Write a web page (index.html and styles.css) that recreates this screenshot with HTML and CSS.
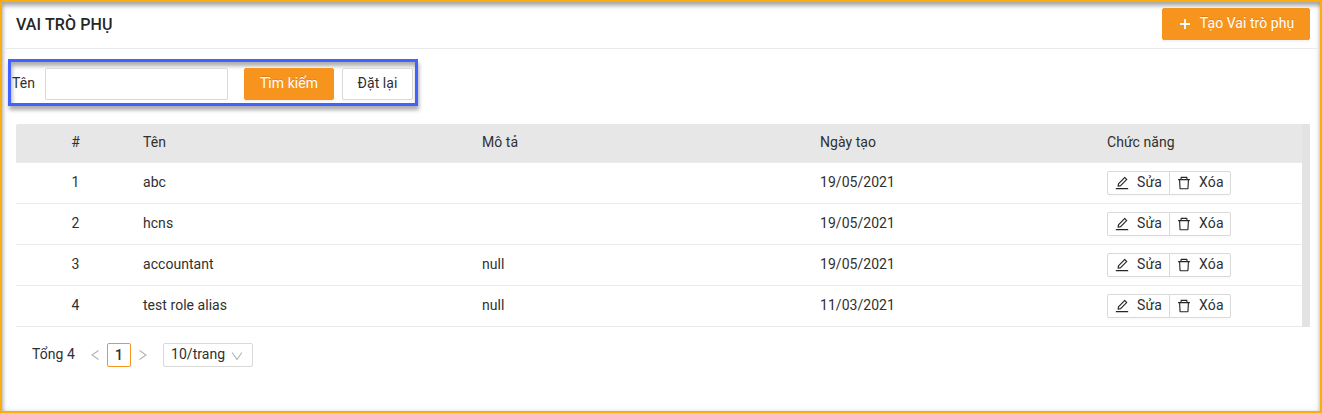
FILE: index.html
```html
<!DOCTYPE html>
<html lang="vi">
<head>
<meta charset="utf-8">
<title>Vai trò phụ</title>
<link rel="stylesheet" href="styles.css">
</head>
<body>
<svg class="sprite" aria-hidden="true">
  <symbol id="edit" viewBox="64 64 896 896"><path d="M257.700 752c2 0 4-.2 6-.5L431.900 722c2-.4 3.900-1.300 5.300-2.800l423.900-423.900a9.960 9.960 0 0 0 0-14.100L694.900 114.900c-1.900-1.900-4.400-2.900-7.100-2.900s-5.200 1-7.100 2.900L256.800 538.800c-1.500 1.500-2.400 3.300-2.800 5.300l-29.500 168.200a33.500 33.500 0 0 0 9.400 29.800c6.600 6.400 14.900 9.900 23.800 9.900zm67.400-174.400L687.800 215l73.300 73.300-362.700 362.600-88.900 15.700 15.600-89zM880 836H144c-17.700 0-32 14.300-32 32v36c0 4.400 3.600 8 8 8h784c4.400 0 8-3.600 8-8v-36c0-17.700-14.300-32-32-32z"/></symbol>
  <symbol id="trash" viewBox="64 64 896 896"><path d="M360 184h-8c4.400 0 8-3.600 8-8v8h304v-8c0 4.400 3.600 8 8 8h-8v72h72v-80c0-35.300-28.700-64-64-64H352c-35.300 0-64 28.700-64 64v80h72v-72zm504 72H160c-17.700 0-32 14.300-32 32v32c0 4.400 3.600 8 8 8h60.400l24.700 523c1.600 34.100 29.800 61 63.900 61h454c34.200 0 62.300-26.800 63.900-61l24.700-523H888c4.400 0 8-3.600 8-8v-32c0-17.700-14.300-32-32-32zM731.300 840H292.700l-24.200-512h487l-24.200 512z"/></symbol>
</svg>
<main class="panel">
  <header class="head">
    <h1 class="title">VAI TRÒ PHỤ</h1>
    <button class="btn primary create"><svg class="plus" viewBox="0 0 14 14"><path d="M7 2v10M2 7h10"/></svg><span>Tạo Vai trò phụ</span></button>
  </header>
  <form class="search">
    <label class="label" for="name">Tên</label>
    <input class="input" id="name" type="text">
    <button class="btn primary find" type="button">Tìm kiếm</button>
    <button class="btn reset" type="button">Đặt lại</button>
  </form>
  <section class="table">
    <div class="rows">
      <div class="row thead"><span class="num">#</span><span>Tên</span><span>Mô tả</span><span>Ngày tạo</span><span>Chức năng</span></div>
      <div class="row"><span class="num">1</span><span>abc</span><span></span><span>19/05/2021</span><div class="actions"><button class="act"><svg class="icon"><use href="#edit"/></svg>Sửa</button><button class="act"><svg class="icon"><use href="#trash"/></svg>Xóa</button></div></div>
      <div class="row"><span class="num">2</span><span>hcns</span><span></span><span>19/05/2021</span><div class="actions"><button class="act"><svg class="icon"><use href="#edit"/></svg>Sửa</button><button class="act"><svg class="icon"><use href="#trash"/></svg>Xóa</button></div></div>
      <div class="row"><span class="num">3</span><span>accountant</span><span>null</span><span>19/05/2021</span><div class="actions"><button class="act"><svg class="icon"><use href="#edit"/></svg>Sửa</button><button class="act"><svg class="icon"><use href="#trash"/></svg>Xóa</button></div></div>
      <div class="row"><span class="num">4</span><span>test role alias</span><span>null</span><span>11/03/2021</span><div class="actions"><button class="act"><svg class="icon"><use href="#edit"/></svg>Sửa</button><button class="act"><svg class="icon"><use href="#trash"/></svg>Xóa</button></div></div>
    </div>
    <div class="track"></div>
  </section>
  <footer class="pager">
    <span class="total">Tổng 4</span>
    <svg class="arrow" viewBox="0 0 8 12"><path d="M7.500 1.500 1 6l6.500 4.500"/></svg>
    <span class="page">1</span>
    <svg class="arrow" viewBox="0 0 8 12"><path d="M.5 1.500 7 6 .5 10.500"/></svg>
    <span class="size">10/trang<svg class="chev" viewBox="0 0 12 10"><path d="m1.200 1.500 4.800 7 4.800-7"/></svg></span>
  </footer>
</main>
</body>
</html>
```
FILE: styles.css
```css
* { box-sizing: border-box; }
body { margin: 0; font: 14px/22px Roboto, sans-serif; letter-spacing: .04px; color: #303030; background: #fff; }
.sprite { display: none; }
.panel { height: 413px; border: 2px solid #faad0c; box-shadow: inset 1px 4px 4px rgba(0,0,0,.3), inset -1px 0 4px rgba(0,0,0,.15); }
.head { display: flex; justify-content: space-between; height: 47px; margin: 0 2px; padding: 6px 8px 0 12px; border-bottom: 1px solid #ebebeb; }
.title { margin: 6px 0 0; font-size: 16px; line-height: 22px; font-weight: 500; letter-spacing: .12px; color: #262626; }
.btn { display: flex; align-items: center; justify-content: center; height: 32px; padding: 0 0 2px; border: 1px solid #d9d9d9; border-radius: 2px; background: #fff; color: #303030; font: inherit; letter-spacing: inherit; box-shadow: 0 2px 0 rgba(0,0,0,.02); white-space: nowrap; }
.primary { border-color: #f7941e; background: #f7941e; color: #fff; text-shadow: 0 -1px 0 rgba(0,0,0,.12); box-shadow: 0 2px 0 rgba(0,0,0,.04); }
.create { width: 148px; gap: 8px; }
.plus { width: 14px; height: 14px; margin-top: 2px; fill: none; stroke: #fff; stroke-width: 1.800; }
.search { display: flex; width: 410px; height: 47px; margin: 10px 0 0 6px; padding: 6px 0 0 1px; border: 3px solid #4261ff; box-shadow: 1px 4px 4px rgba(0,0,0,.33), inset 1px 4px 4px rgba(0,0,0,.33); }
.label { width: 33px; line-height: 30px; }
.input { width: 183px; height: 32px; border: 1px solid #d9d9d9; border-radius: 2px; background: #fff; }
.find { width: 90px; margin-left: 16px; }
.reset { width: 71px; margin-left: 8px; }
.table { display: flex; width: 1294px; height: 203px; margin: 18px 0 0 14px; }
.rows { width: 1286px; }
.row { display: grid; grid-template-columns: 119px 339px 338px 287px 1fr; height: 41px; padding-left: 8px; border-bottom: 1px solid #ebebeb; line-height: 38px; }
.thead { height: 39px; background: #e7e7e7; line-height: 36px; border-radius: 2px 0 0; }
.num { padding-right: 16px; text-align: center; }
.track { width: 8px; background: #e3e3e3; }
.actions { display: flex; align-items: flex-start; padding-top: 8px; }
.act { display: flex; align-items: center; width: 63px; height: 24px; padding: 0 0 2px 7px; border: 1px solid #d9d9d9; border-radius: 2px 0 0 2px; background: #fff; color: #303030; font: inherit; letter-spacing: .15px; box-shadow: 0 2px 0 rgba(0,0,0,.015); }
.act + .act { width: 62px; margin-left: -1px; border-radius: 0 2px 2px 0; }
.icon { width: 14px; height: 14px; margin: 2px 8px 0 0; fill: #262626; }
.pager { display: flex; align-items: center; height: 24px; margin: 16px 0 0 30px; }
.total { width: 59px; line-height: 22px; padding-bottom: 2px; }
.arrow { width: 8px; height: 12px; fill: none; stroke: #b3b3b3; stroke-width: 1.100; }
.page { width: 24px; height: 24px; margin: 0 8px; border: 1px solid #f7941e; border-radius: 2px; text-align: center; font-weight: 500; }
.size { display: flex; width: 90px; height: 24px; margin-left: 16px; padding-left: 7px; border: 1px solid #d9d9d9; border-radius: 2px; line-height: 20px; }
.chev { width: 12px; height: 10px; margin: 7px 0 0 6px; fill: none; stroke: #b3b3b3; stroke-width: 1.100; }
```
